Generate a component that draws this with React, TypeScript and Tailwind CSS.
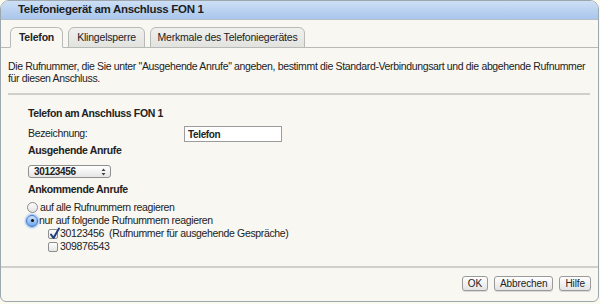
import React from 'react';

const font = { fontFamily: '"Liberation Sans", Arial, sans-serif' };

function Tab({ label, width, active }: { label: string; width: string; active?: boolean }) {
  return (
    <div
      className={
        width +
        ' h-[21px] flex items-center justify-center rounded-t-[6px] border border-[#b7bab6] text-[10.5px] tracking-[-0.2px] text-[#222] -mb-px ' +
        (active
          ? 'bg-[#f8f7f2] border-b-[#f8f7f2] font-bold'
          : 'bg-gradient-to-b from-[#f0f0ee] to-[#e2e2df]')
      }
    >
      {label}
    </div>
  );
}

function Radio({ checked }: { checked?: boolean }) {
  return checked ? (
    <span className="w-[12px] h-[12px] rounded-full border border-[#3d78c9] bg-gradient-to-b from-[#cfe3fb] to-[#6ea6ea] shadow-[0_0_2px_1px_#8fb9f0] flex items-center justify-center">
      <span className="w-[3px] h-[3px] rounded-full bg-[#111]" />
    </span>
  ) : (
    <span className="w-[11px] h-[11px] rounded-full border border-[#8c8c8c] bg-gradient-to-b from-[#fdfdfd] to-[#e4e4e4]" />
  );
}

function Check({ checked }: { checked?: boolean }) {
  return (
    <span className="relative w-[10px] h-[10px] rounded-[2px] border border-[#8e8e8e] bg-gradient-to-b from-[#fefefe] to-[#e6e6e6]">
      {checked && (
        <svg className="absolute -top-[3px] left-[0px]" width="12" height="13" viewBox="0 0 12 13">
          <path d="M2 7.5 L4.5 11 L10 1.5" fill="none" stroke="#1d3f7a" strokeWidth="2" strokeLinecap="round" strokeLinejoin="round" />
        </svg>
      )}
    </span>
  );
}

function Button({ label }: { label: string }) {
  return (
    <div className="h-[15px] px-[5px] flex items-center rounded-[3px] border border-[#9a9a9a] bg-gradient-to-b from-[#ffffff] to-[#e4e4e4] text-[10px] tracking-[-0.1px] text-[#222] shadow-[0_1px_0_#d8d8d8]">
      {label}
    </div>
  );
}

export default function App() {
  return (
    <div className="w-[600px] h-[304px] bg-[#fbfaee]" style={font}>
      <div className="w-[599px] h-[302px] flex flex-col border border-[#9ca8ae] rounded-t-[9px] rounded-b-[6px] overflow-hidden bg-[#f8f7f2]">
        {/* Header */}
        <div className="h-[19px] shrink-0 flex items-center pl-[17px] bg-gradient-to-b from-[#cddff5] to-[#a9c6ec] border-b border-[#b4c0c8]">
          <span className="text-[11.5px] tracking-[-0.3px] font-bold text-[#1e1e1e]">Telefoniegerät am Anschluss FON 1</span>
        </div>

        {/* Tabs */}
        <div className="flex gap-[5px] pl-[9px] pt-[7px] border-b border-[#b7bab6]">
          <Tab label="Telefon" width="w-[53px]" active />
          <Tab label="Klingelsperre" width="w-[77px]" />
          <Tab label="Merkmale des Telefoniegerätes" width="w-[155px]" />
        </div>

        {/* Content */}
        <div className="flex-1 px-[7px] text-[10.5px] tracking-[-0.35px] text-[#222]">
          <p className="mt-[12px] leading-[12px]">
            Die Rufnummer, die Sie unter "Ausgehende Anrufe" angeben, bestimmt die Standard-Verbindungsart und die abgehende Rufnummer für diesen Anschluss.
          </p>
          <div className="mt-[9px] mr-[1px] h-[2px] bg-[#cfd0cb]" />

          <div className="pl-[20px]">
            <div className="mt-[12px] font-bold leading-[13px]">Telefon am Anschluss FON 1</div>

            <div className="mt-[6px] flex items-center h-[16px]">
              <span className="w-[156px]">Bezeichnung:</span>
              <div className="w-[98px] h-[16px] border border-[#9c9c9c] bg-white flex items-center pl-[3px] text-[10px] font-bold">
                Telefon
              </div>
            </div>

            <div className="mt-[2px] font-bold leading-[13px]">Ausgehende Anrufe</div>

            <div className="mt-[8px] w-[83px] h-[13px] rounded-[3px] border border-[#8f8f8f] bg-gradient-to-b from-[#ffffff] to-[#e6e6e6] flex items-center justify-between pl-[5px] pr-[4px] text-[10px] font-bold">
              <span>30123456</span>
              <svg width="5" height="8" viewBox="0 0 5 8">
                <path d="M0.5 3 L2.5 0.5 L4.5 3 Z M0.5 5 L2.5 7.5 L4.5 5 Z" fill="#444" />
              </svg>
            </div>

            <div className="mt-[5px] font-bold leading-[13px]">Ankommende Anrufe</div>

            <div className="mt-[5px] flex items-center gap-[2px] h-[13px] -ml-[1px]">
              <Radio />
              <span>auf alle Rufnummern reagieren</span>
            </div>
            <div className="flex items-center gap-[1px] h-[13px] -ml-[2px]">
              <Radio checked />
              <span>nur auf folgende Rufnummern reagieren</span>
            </div>
            <div className="flex items-center gap-[2px] h-[13px] pl-[20px]">
              <Check checked />
              <span>30123456&nbsp; (Rufnummer für ausgehende Gespräche)</span>
            </div>
            <div className="flex items-center gap-[2px] h-[13px] pl-[20px]">
              <Check />
              <span>309876543</span>
            </div>
          </div>
        </div>

        {/* Footer */}
        <div className="h-[35px] shrink-0 border-t-2 border-[#cfd0cb] flex justify-end items-start gap-[6px] pt-[8px] pr-[7px]">
          <Button label="OK" />
          <Button label="Abbrechen" />
          <Button label="Hilfe" />
        </div>
      </div>
    </div>
  );
}
